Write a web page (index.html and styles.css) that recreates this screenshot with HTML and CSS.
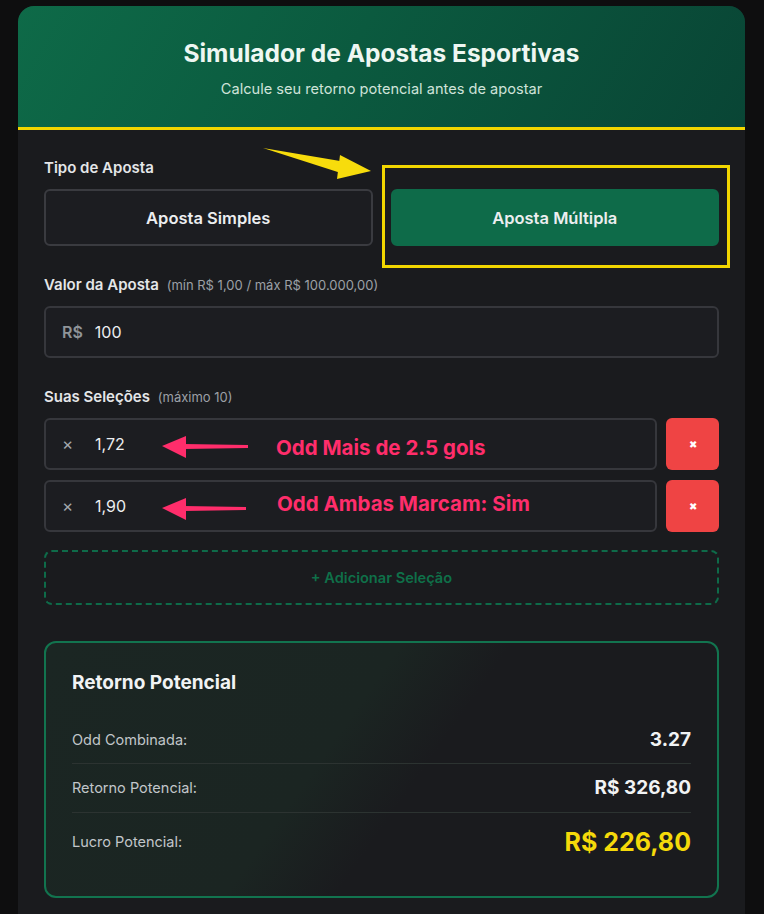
FILE: index.html
```html
<!DOCTYPE html>
<html lang="pt-BR">
  <head>
    <meta charset="UTF-8" />
    <meta name="viewport" content="width=device-width, initial-scale=1.0" />
    <title>Simulador de Apostas Esportivas</title>
    <link rel="stylesheet" href="styles.css">
  </head>
  <body>
    <div class="card">
      <div class="header">
        <h1>Simulador de Apostas Esportivas</h1>
        <p>Calcule seu retorno potencial antes de apostar</p>
      </div>

      <div class="content">
        <!-- Tipo de aposta -->
        <div class="field">
          <div class="label">Tipo de Aposta</div>
          <div class="type-options">
            <button class="type-btn">Aposta Simples</button>
            <button class="type-btn active">Aposta Múltipla</button>
          </div>
        </div>

        <!-- Valor -->
        <div class="field">
          <div class="label">Valor da Aposta <span class="hint">(mín R$ 1,00 / máx R$ 100.000,00)</span></div>
          <div class="money-input">
            <span class="prefix">R$</span>
            <span class="value">100</span>
          </div>
        </div>

        <!-- Seleções -->
        <div class="field selections">
          <div class="label">Suas Seleções <span class="hint">(máximo 10)</span></div>
          <div class="selection">
            <div class="odd-input"><span class="mult">×</span><span class="value">1,72</span></div>
            <button class="remove-btn">✖</button>
          </div>
          <div class="selection">
            <div class="odd-input"><span class="mult">×</span><span class="value">1,90</span></div>
            <button class="remove-btn">✖</button>
          </div>
          <button class="add-btn">+ Adicionar Seleção</button>
        </div>

        <!-- Resultado -->
        <div class="result">
          <h2>Retorno Potencial</h2>
          <div class="result-row">
            <span class="result-label">Odd Combinada:</span>
            <span class="result-value">3.27</span>
          </div>
          <div class="result-row">
            <span class="result-label">Retorno Potencial:</span>
            <span class="result-value">R$ 326,80</span>
          </div>
          <div class="result-row last">
            <span class="result-label">Lucro Potencial:</span>
            <span class="result-value profit">R$ 226,80</span>
          </div>
        </div>
      </div>
    </div>

    <!-- Anotações por cima da tela -->
    <div class="highlight-box"></div>
    <div class="note note-1">Odd Mais de 2.5 gols</div>
    <div class="note note-2">Odd Ambas Marcam: Sim</div>
    <svg class="arrows" width="764" height="914" viewBox="0 0 764 914">
      <path d="M263 148 L346 162 L344 174 Z" fill="#f7dc0c" />
      <polygon points="340,155 371,171 337,179" fill="#f7dc0c" />
      <path d="M248 445 L184 444 L184 449 L248 448 Z" fill="#ff2d6b" />
      <polygon points="162,446 186,436 186,458" fill="#ff2d6b" />
      <path d="M246 507 L184 506 L184 511 L246 510 Z" fill="#ff2d6b" />
      <polygon points="162,508 186,498 186,520" fill="#ff2d6b" />
    </svg>
  </body>
</html>
```

FILE: styles.css
```css
/* Geral */
body {
  margin: 6px 19px 0 18px;
  background-color: #0e0e0f;
  font-family: Inter, "Noto Sans", sans-serif;
  color: #e6e8ea;
}

.card {
  background-color: #1a1b1e;
  border-radius: 16px 16px 0 0;
  overflow: hidden;
}

/* Cabeçalho */
.header {
  background: linear-gradient(120deg, #0e6a48 0%, #0b5a3f 45%, #094535 100%);
  border-bottom: 3px solid #f2d600;
  text-align: center;
  height: 124px;
  box-sizing: border-box;
  padding-top: 32px;
}

.header h1 {
  margin: 0;
  font-size: 24.5px;
  font-weight: 700;
  color: #eef7f2;
  line-height: 30px;
}

.header p {
  margin: 11px 0 0;
  font-size: 14.6px;
  color: #cfe3d9;
  line-height: 20px;
}

/* Conteúdo */
.content {
  padding: 28px 26px 40px 26px;
}

.field {
  margin-bottom: 29px;
}

.label {
  font-size: 15px;
  font-weight: 600;
  line-height: 20px;
  color: #e4e6e8;
  margin-bottom: 11px;
}

.hint {
  font-size: 13px;
  font-weight: 400;
  color: #9ca0a6;
  margin-left: 4px;
}

.type-options {
  display: flex;
  gap: 18px;
}

.type-btn {
  flex: 1;
  height: 57px;
  background-color: #1c1d21;
  border: 2px solid #3a3b40;
  border-radius: 6px;
  color: #eceef0;
  font-family: inherit;
  font-size: 16.5px;
  font-weight: 600;
}

.type-btn.active {
  background-color: #0e6b49;
  border-color: #0e6b49;
}

.money-input {
  height: 52px;
  box-sizing: border-box;
  border: 2px solid #36373c;
  border-radius: 6px;
  background-color: #1c1d21;
  display: flex;
  align-items: center;
  padding-left: 16px;
  font-size: 16px;
}

.prefix {
  color: #8f9499;
  font-weight: 600;
  margin-right: 12px;
}

.value {
  color: #eceef0;
}

/* Seleções */
.selection {
  display: flex;
  gap: 9px;
  margin-bottom: 10px;
}

.odd-input {
  flex: 1;
  height: 52px;
  box-sizing: border-box;
  border: 2px solid #36373c;
  border-radius: 6px;
  background-color: #1c1d21;
  display: flex;
  align-items: center;
  padding-left: 16px;
  font-size: 16px;
}

.mult {
  color: #a4a8ad;
  font-size: 17px;
  width: 33px;
}

.remove-btn {
  width: 53px;
  height: 52px;
  border: none;
  border-radius: 6px;
  background-color: #ef4444;
  color: #fff;
  font-size: 10px;
  padding: 0;
}

.add-btn {
  display: block;
  width: 100%;
  height: 55px;
  margin-top: 18px;
  background: transparent;
  border: 2px dashed #0e6b49;
  border-radius: 8px;
  color: #0f7049;
  font-family: inherit;
  font-size: 14.6px;
  font-weight: 600;
}

.field.selections {
  margin-bottom: 36px;
}

/* Resultado */
.result {
  border: 2px solid #12744f;
  border-radius: 12px;
  padding: 27px 26px 25px;
  background: linear-gradient(125deg, #1b2623 0%, #1b2522 42%, #1a1b1e 55%);
}

.result h2 {
  margin: 0 0 21px;
  font-size: 19px;
  font-weight: 700;
  line-height: 26px;
  color: #f1f3f4;
}

.result-row {
  display: flex;
  justify-content: space-between;
  align-items: center;
  padding: 11px 0;
  border-bottom: 1px solid #2c3331;
  line-height: 24px;
}

.result-row + .result-row {
  padding: 12px 0;
}

.result-row.last {
  border-bottom: none;
  padding: 13px 0;
}

.result-label {
  font-size: 14.5px;
  color: #c2c6ca;
}

.result-value {
  font-size: 19px;
  font-weight: 700;
  color: #f1f3f4;
}

.result-value.profit {
  font-size: 25px;
  line-height: 32px;
  color: #f5d90a;
}

/* Anotações */
.highlight-box {
  position: absolute;
  left: 382px;
  top: 165px;
  width: 342px;
  height: 97px;
  border: 3px solid #f2d600;
}

.note {
  position: absolute;
  font-size: 20.5px;
  font-weight: 700;
  color: #ff2d6b;
  line-height: 24px;
}

.note-1 {
  left: 276px;
  top: 436px;
}

.note-2 {
  left: 277px;
  top: 492px;
}

.arrows {
  position: absolute;
  left: 0;
  top: 0;
  pointer-events: none;
}
```
